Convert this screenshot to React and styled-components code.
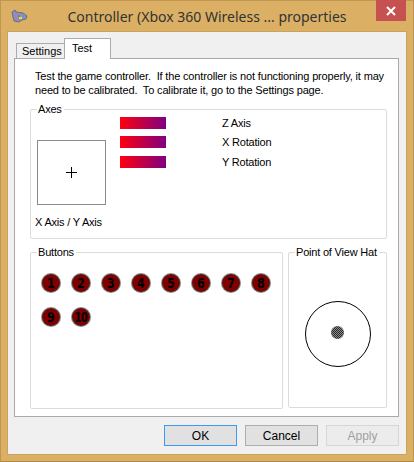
import React from "react";
import styled, { createGlobalStyle } from "styled-components";

const GlobalStyle = createGlobalStyle`
  html, body {
    margin: 0;
    padding: 0;
    width: 414px;
    height: 462px;
    overflow: hidden;
    background: #dbb064;
  }
  * {
    box-sizing: border-box;
  }
`;

const axes = ["Z Axis", "X Rotation", "Y Rotation"];
const buttons = [1, 2, 3, 4, 5, 6, 7, 8, 9, 10];

const App = () => {
  return (
    <>
      <GlobalStyle />
      <Window>
        <TitleBar>
          <AppIcon viewBox="0 0 18 14">
            <path d="M2 3 L5 1 L6 3 L13 4 L17 7 L16 10 L12 11 L9 13 L4 12 L3 8 Z" fill="#8d8fb8" stroke="#5d5f86" strokeWidth="0.8" />
            <rect x="8" y="6" width="2" height="2" fill="#e14b8a" />
            <rect x="10" y="6" width="2" height="2" fill="#5ec95a" />
            <rect x="12" y="6" width="2" height="2" fill="#4aa0e8" />
            <rect x="9" y="8" width="3" height="2" fill="#f2d34a" />
          </AppIcon>
          <Title>Controller (Xbox 360 Wireless ... properties</Title>
          <CloseButton>
            <svg width="10" height="10" viewBox="0 0 10 10">
              <path d="M1 1 L9 9 M9 1 L1 9" stroke="#fff" strokeWidth="2" />
            </svg>
          </CloseButton>
        </TitleBar>

        <Client>
          <Tabs>
            <Tab>Settings</Tab>
            <Tab $active>Test</Tab>
          </Tabs>

          <Panel>
            <Intro>
              {"Test the game controller.  If the controller is not functioning properly, it may\nneed to be calibrated.  To calibrate it, go to the Settings page."}
            </Intro>

            <Group $width={357} $height={130}>
              <Legend>Axes</Legend>
              <AxesBody>
                <XYColumn>
                  <XYBox>
                    <svg width="11" height="11" viewBox="0 0 11 11">
                      <path d="M5.5 0 V11 M0 5.5 H11" stroke="#000" strokeWidth="1" />
                    </svg>
                  </XYBox>
                  <Caption>X Axis / Y Axis</Caption>
                </XYColumn>
                <AxisList>
                  {axes.map((name) => (
                    <AxisRow key={name}>
                      <Bar />
                      <Caption>{name}</Caption>
                    </AxisRow>
                  ))}
                </AxisList>
              </AxesBody>
            </Group>

            <LowerRow>
              <Group $width={253} $height={157}>
                <Legend>Buttons</Legend>
                <ButtonGrid>
                  {buttons.map((n) => (
                    <Cell key={n}>
                      <Knob>
                        <Numeral $tight={n > 9}>{n}</Numeral>
                      </Knob>
                    </Cell>
                  ))}
                </ButtonGrid>
              </Group>
              <Group $width={99} $height={156}>
                <Legend>Point of View Hat</Legend>
                <HatArea>
                  <HatRing>
                    <HatDot />
                  </HatRing>
                </HatArea>
              </Group>
            </LowerRow>
          </Panel>

          <Footer>
            <DialogButton $default>OK</DialogButton>
            <DialogButton>Cancel</DialogButton>
            <DialogButton disabled>Apply</DialogButton>
          </Footer>
        </Client>
      </Window>
    </>
  );
};

const Window = styled.div`
  width: 414px;
  height: 462px;
  background: #dbb064;
  border: 1px solid #c09650;
  border-bottom-color: #b08a48;
  display: flex;
  flex-direction: column;
  padding: 0 6px 6px 6px;
  font-family: "Liberation Sans", Arial, sans-serif;
  letter-spacing: -0.2px;
`;

const TitleBar = styled.div`
  height: 30px;
  display: grid;
  grid-template-columns: 1fr auto 1fr;
  align-items: start;
`;

const AppIcon = styled.svg`
  width: 18px;
  height: 14px;
  margin: 8px 0 0 3px;
`;

const Title = styled.div`
  font-family: "Noto Sans", "Open Sans", sans-serif;
  font-size: 14px;
  letter-spacing: 0;
  color: #333;
  padding-top: 6px;
  white-space: nowrap;
`;

const CloseButton = styled.div`
  justify-self: end;
  width: 30px;
  height: 21px;
  margin: -1px 1px 0 0;
  background: #c75050;
  display: flex;
  align-items: center;
  justify-content: center;
`;

const Client = styled.div`
  flex: 1;
  background: #f0f0f0;
  border: 1px solid #c8a35d;
  padding: 6px 7px 0 6px;
  display: flex;
  flex-direction: column;
`;

const Tabs = styled.div`
  display: flex;
  align-items: flex-end;
  padding-left: 2px;
  height: 21px;
  margin-bottom: -1px;
  position: relative;
  z-index: 1;
`;

const Tab = styled.div`
  font-size: 11px;
  letter-spacing: 0;
  color: #000;
  white-space: nowrap;
  border: 1px solid #acacac;
  border-bottom: ${({ $active }) => ($active ? "none" : "1px solid #acacac")};
  background: ${({ $active }) => ($active ? "#fff" : "#f0f0f0")};
  height: ${({ $active }) => ($active ? "21px" : "16px")};
  width: ${({ $active }) => ($active ? "47px" : "49px")};
  padding: ${({ $active }) => ($active ? "3px 0 0 7px" : "1px 0 0 5px")};
  margin-left: ${({ $active }) => ($active ? "-1px" : "0")};
`;

const Panel = styled.div`
  width: 385px;
  height: 359px;
  background: #fff;
  border: 1px solid #a9a9a9;
  padding: 10px 0 0 15px;
  display: flex;
  flex-direction: column;
`;

const Intro = styled.div`
  font-size: 11px;
  line-height: 14px;
  letter-spacing: -0.16px;
  color: #000;
  white-space: pre;
  padding-left: 5px;
  margin-bottom: 12px;
`;

const Group = styled.div`
  position: relative;
  width: ${({ $width }) => $width}px;
  height: ${({ $height }) => $height}px;
  border: 1px solid #dcdcdc;
  border-radius: 2px;
`;

const Legend = styled.span`
  position: absolute;
  top: -8px;
  left: 6px;
  padding: 0 2px 0 1px;
  background: #fff;
  font-size: 11px;
  line-height: 14px;
  color: #000;
  white-space: nowrap;
`;

const AxesBody = styled.div`
  display: flex;
  padding: 7px 0 0 4px;
`;

const XYColumn = styled.div`
  width: 85px;
  padding-top: 23px;
  display: flex;
  flex-direction: column;
`;

const XYBox = styled.div`
  width: 69px;
  height: 65px;
  margin-left: 2px;
  border: 1px solid #888c92;
  display: flex;
  align-items: center;
  justify-content: center;
`;

const Caption = styled.span`
  font-size: 11px;
  line-height: 13px;
  color: #000;
  white-space: nowrap;
  ${XYColumn} & {
    margin-top: 11px;
  }
`;

const AxisList = styled.div`
  display: flex;
  flex-direction: column;
  gap: 7px;
  & > :last-child {
    margin-top: 1px;
  }
`;

const AxisRow = styled.div`
  display: flex;
  align-items: center;
  gap: 56px;
  height: 12px;
`;

const Bar = styled.div`
  width: 46px;
  height: 12px;
  background: linear-gradient(to right, #ff0010, #800080);
`;

const LowerRow = styled.div`
  display: flex;
  gap: 5px;
  margin-top: 13px;
`;

const ButtonGrid = styled.div`
  display: grid;
  grid-template-columns: repeat(8, 30px);
  grid-auto-rows: 34px;
  padding: 13px 0 0 5px;
`;

const Cell = styled.div`
  display: flex;
  align-items: center;
  justify-content: center;
`;

const Knob = styled.div`
  width: 18px;
  height: 18px;
  border-radius: 50%;
  background: #800000;
  border: 1px dotted #2a2a2a;
  box-shadow: 0 0 0 1px #8a8a8a;
  display: flex;
  align-items: center;
  justify-content: center;
  overflow: hidden;
`;

const Numeral = styled.span`
  display: inline-block;
  font-family: "DejaVu Sans", "Liberation Sans", sans-serif;
  font-size: 14px;
  line-height: 14px;
  font-weight: bold;
  color: #000;
  letter-spacing: ${({ $tight }) => ($tight ? "-1px" : "0")};
  transform: scaleX(${({ $tight }) => ($tight ? 0.72 : 0.8)});
`;

const HatArea = styled.div`
  height: 100%;
  display: flex;
  align-items: center;
  justify-content: center;
  padding-top: 7px;
`;

const HatRing = styled.div`
  width: 66px;
  height: 66px;
  border-radius: 50%;
  border: 1px solid #000;
  display: flex;
  align-items: center;
  justify-content: center;
`;

const HatDot = styled.div`
  width: 13px;
  height: 13px;
  border-radius: 50%;
  background: repeating-conic-gradient(#2a2a2a 0 25%, #8a8a8a 0 50%) 0 0 / 2px 2px;
  margin-top: -2px;
`;

const Footer = styled.div`
  display: flex;
  justify-content: flex-end;
  gap: 8px;
  padding: 8px 0 0;
`;

const DialogButton = styled.button`
  width: 73px;
  height: 21px;
  padding: 0;
  font-family: "Liberation Sans", Arial, sans-serif;
  font-size: 12px;
  color: #000;
  background: #e1e1e1;
  border: 1px solid ${({ $default }) => ($default ? "#3c9af0" : "#adadad")};
  border-radius: 0;
  &:disabled {
    color: #a0a0a0;
    background: #ececec;
    border-color: #d6d6d6;
  }
`;

export default App;
